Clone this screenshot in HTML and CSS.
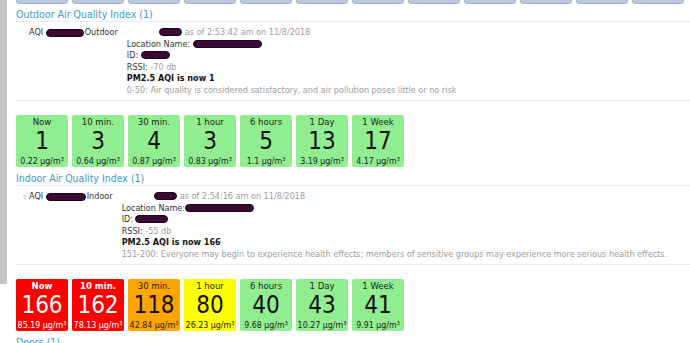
FILE: index.html
```html
<!DOCTYPE html>
<html lang="en">
<head>
  <meta charset="UTF-8" />
  <title>Air Quality</title>
  <link rel="stylesheet" href="styles.css">
</head>
<body>
  <div class="page">
    <div class="side"></div>

    <main class="content">
      <!-- top tab strip (scrolled mostly out of view) -->
      <nav class="tabs">
        <span class="tab"></span><span class="tab"></span><span class="tab"></span>
        <span class="tab"></span><span class="tab"></span><span class="tab"></span>
        <span class="tab"></span><span class="tab"></span><span class="tab"></span>
        <span class="tab"></span><span class="tab"></span><span class="tab"></span>
      </nav>

      <!-- Outdoor -->
      <section class="group">
        <h2 class="group-title">Outdoor Air Quality Index (1)</h2>
        <div class="sensor">
          <div class="sensor-name"><span class="dot dot-off"></span>AQI&nbsp;<span class="redact r-name"></span>Outdoor</div>
          <div class="sensor-info">
            <div class="info-line"><span class="faint">··</span><span class="redact r-short"></span><span class="muted">as of 2:53:42 am on 11/8/2018</span></div>
            <div class="info-line">Location Name: <span class="redact r-loc"></span></div>
            <div class="info-line">ID: <span class="redact r-id"></span></div>
            <div class="info-line">RSSI: <span class="muted">-70 db</span></div>
            <div class="info-line strong">PM2.5 AQI is now 1</div>
            <div class="info-line muted">0-50: Air quality is considered satisfactory, and air pollution poses little or no risk</div>
          </div>
        </div>
        <div class="tiles">
          <div class="tile good"><span class="tile-label">Now</span><span class="tile-value">1</span><span class="tile-sub">0.22 µg/m³</span></div>
          <div class="tile good"><span class="tile-label">10 min.</span><span class="tile-value">3</span><span class="tile-sub">0.64 µg/m³</span></div>
          <div class="tile good"><span class="tile-label">30 min.</span><span class="tile-value">4</span><span class="tile-sub">0.87 µg/m³</span></div>
          <div class="tile good"><span class="tile-label">1 hour</span><span class="tile-value">3</span><span class="tile-sub">0.83 µg/m³</span></div>
          <div class="tile good"><span class="tile-label">6 hours</span><span class="tile-value">5</span><span class="tile-sub">1.1 µg/m³</span></div>
          <div class="tile good"><span class="tile-label">1 Day</span><span class="tile-value">13</span><span class="tile-sub">3.19 µg/m³</span></div>
          <div class="tile good"><span class="tile-label">1 Week</span><span class="tile-value">17</span><span class="tile-sub">4.17 µg/m³</span></div>
        </div>
      </section>

      <!-- Indoor -->
      <section class="group">
        <h2 class="group-title">Indoor Air Quality Index (1)</h2>
        <div class="sensor">
          <div class="sensor-name"><span class="dot"></span>AQI&nbsp;<span class="redact r-name2"></span>Indoor</div>
          <div class="sensor-info">
            <div class="info-line"><span class="faint">·</span><span class="redact r-short"></span><span class="muted">as of 2:54:16 am on 11/8/2018</span></div>
            <div class="info-line">Location Name:<span class="redact r-loc"></span></div>
            <div class="info-line">ID:<span class="redact r-id2"></span></div>
            <div class="info-line">RSSI: <span class="muted">-55 db</span></div>
            <div class="info-line strong">PM2.5 AQI is now 166</div>
            <div class="info-line muted">151-200: Everyone may begin to experience health effects; members of sensitive groups may experience more serious health effects.</div>
          </div>
        </div>
        <div class="tiles">
          <div class="tile unhealthy"><span class="tile-label">Now</span><span class="tile-value">166</span><span class="tile-sub">85.19 µg/m³</span></div>
          <div class="tile unhealthy"><span class="tile-label">10 min.</span><span class="tile-value">162</span><span class="tile-sub">78.13 µg/m³</span></div>
          <div class="tile sensitive"><span class="tile-label">30 min.</span><span class="tile-value">118</span><span class="tile-sub">42.84 µg/m³</span></div>
          <div class="tile moderate"><span class="tile-label">1 hour</span><span class="tile-value">80</span><span class="tile-sub">26.23 µg/m³</span></div>
          <div class="tile good"><span class="tile-label">6 hours</span><span class="tile-value">40</span><span class="tile-sub">9.68 µg/m³</span></div>
          <div class="tile good"><span class="tile-label">1 Day</span><span class="tile-value">43</span><span class="tile-sub">10.27 µg/m³</span></div>
          <div class="tile good"><span class="tile-label">1 Week</span><span class="tile-value">41</span><span class="tile-sub">9.91 µg/m³</span></div>
        </div>
      </section>

      <!-- Doors -->
      <section class="group">
        <h2 class="group-title">Doors (1)</h2>
      </section>
    </main>
  </div>
</body>
</html>
```

FILE: styles.css
```css
/* ===== base ===== */
body {
  margin: 0;
  font-family: "DejaVu Sans Condensed", "DejaVu Sans", sans-serif;
  font-stretch: condensed;
  font-size: 9px;
  color: #333;
  background-color: #fff;
  overflow: hidden;
}

.page {
  display: flex;
  align-items: flex-start;
}

.side {
  width: 7px;
  height: 284px;
  flex-shrink: 0;
  background-color: #c4c4c4;
}

.content {
  flex: 1;
  padding-left: 9px;
}

/* ===== tab strip ===== */
.tabs {
  display: flex;
  align-items: flex-end;
  gap: 4px;
  height: 4px;
  overflow: hidden;
}

.tab {
  width: 52px;
  height: 20px;
  flex-shrink: 0;
  box-sizing: border-box;
  background-color: #b9c8dd;
  border: 1px solid #a2b4cc;
  border-radius: 3px;
}

/* ===== group headings ===== */
.group-title {
  margin: 0;
  padding-top: 4px;
  font-size: 10.5px;
  line-height: 13px;
  font-weight: normal;
  color: #3d9cc6;
  border-bottom: 1px solid #ebebeb;
}

/* ===== sensor row ===== */
.sensor {
  display: flex;
  gap: 9px;
  padding: 5px 0 4px 7px;
  border-bottom: 1px solid #ebebeb;
  line-height: 11.5px;
}

.sensor-name {
  display: flex;
  align-items: center;
  height: 11.5px;
}

.dot {
  width: 4px;
  height: 4px;
  margin-right: 2px;
  border-radius: 50%;
  background-color: #cfe3f2;
}

.dot-off {
  background-color: transparent;
}

.redact {
  display: inline-block;
  height: 8px;
  vertical-align: -1px;
  background-color: #3b0a34;
  border: 1px solid #1c0418;
  border-radius: 4px;
  box-sizing: border-box;
}

.r-name { width: 38px; margin-right: 1px; }
.r-name2 { width: 40px; margin-right: 1px; }
.r-short { width: 23px; margin-right: 3px; }
.r-loc { width: 69px; }
.r-id { width: 29px; }
.r-id2 { width: 33px; margin-left: 2px; }

.faint {
  display: inline-block;
  width: 32px;
  color: #e2e2e2;
}

.muted {
  color: #9d9d9d;
}

.strong {
  font-weight: bold;
  color: #111;
}

/* ===== AQI tiles ===== */
.tiles {
  display: flex;
  gap: 4px;
  width: max-content;
  margin: 14px 0 1px;
  padding-right: 8px;
  border-right: 1px solid #f3f3f3;
}

.tile {
  display: flex;
  flex-direction: column;
  align-items: center;
  width: 52px;
  height: 52px;
  padding: 1px 0;
  box-sizing: border-box;
  border-radius: 2px;
  color: #222;
  white-space: nowrap;
}

.tile-label {
  font-size: 9.5px;
  line-height: 11px;
}

.tile-value {
  font-size: 24px;
  line-height: 29px;
  color: #111;
}

.tile-sub {
  font-size: 8.8px;
  line-height: 10px;
}

.good { background-color: #90ee90; }
.moderate { background-color: #ffff00; }
.sensitive { background-color: #ffa500; }

.unhealthy {
  background-color: #ff0000;
  color: #fff;
}

.unhealthy .tile-label {
  font-weight: bold;
}

.unhealthy .tile-value {
  color: #fff;
}
```
